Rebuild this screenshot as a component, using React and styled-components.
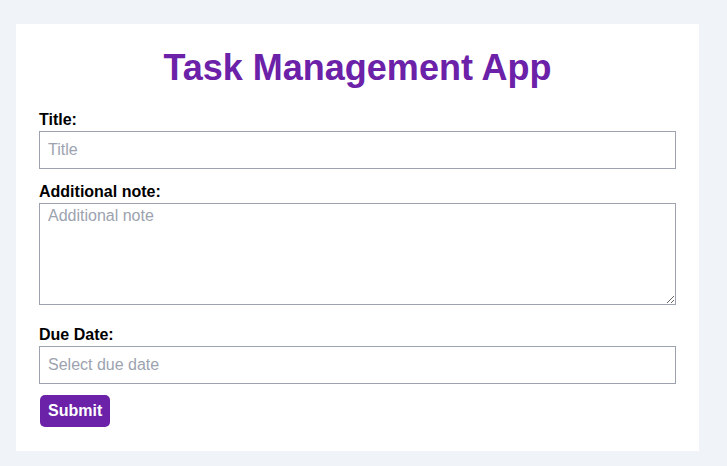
import React, { useState } from "react";
import styled, { createGlobalStyle } from "styled-components";

const GlobalStyle = createGlobalStyle`
  html,
  body {
    margin: 0;
    padding: 0;
    background-color: #f0f4f8;
    font-family: "Liberation Sans", Arial, sans-serif;
  }
`;

const Page = styled.div`
  min-height: 466px;
  box-sizing: border-box;
  padding: 24px 0 15px 16px;
`;

const Card = styled.div`
  width: 683px;
  box-sizing: border-box;
  padding: 23px 23px 24px;
  background-color: #ffffff;
`;

const Heading = styled.h1`
  margin: 0 0 23px;
  font-size: 36px;
  line-height: 41px;
  font-weight: bold;
  text-align: center;
  color: #6b21a8;
`;

const Form = styled.form`
  display: flex;
  flex-direction: column;
`;

const Field = styled.div`
  margin-bottom: ${(p) => p.$gap}px;
`;

const Label = styled.label`
  display: block;
  margin-bottom: 2px;
  font-size: 16px;
  line-height: 18px;
  font-weight: bold;
  color: #000000;
`;

const Input = styled.input`
  display: block;
  width: 100%;
  height: 38px;
  box-sizing: border-box;
  padding: 0 8px;
  border: 1px solid #9ca3af;
  border-radius: 0;
  font-family: inherit;
  font-size: 16px;
  color: #111827;
  outline: none;

  &::placeholder {
    color: #9ca3af;
  }
`;

const TextArea = styled.textarea`
  display: block;
  width: 100%;
  height: 102px;
  box-sizing: border-box;
  padding: 3px 8px;
  border: 1px solid #9ca3af;
  border-radius: 0;
  font-family: inherit;
  font-size: 16px;
  color: #111827;
  outline: none;

  &::placeholder {
    color: #9ca3af;
  }
`;

const SubmitButton = styled.button`
  align-self: flex-start;
  height: 32px;
  margin-left: 1px;
  padding: 0 8px;
  border: none;
  border-radius: 5px;
  background-color: #6b21a8;
  color: #ffffff;
  font-family: inherit;
  font-size: 16px;
  font-weight: bold;
  cursor: pointer;
`;

export default function App() {
  const [task, setTask] = useState({ title: "", note: "", due: "" });

  const update = (key) => (e) => setTask({ ...task, [key]: e.target.value });

  return (
    <>
      <GlobalStyle />
      <Page>
        <Card>
          <Heading>Task Management App</Heading>
          <Form onSubmit={(e) => e.preventDefault()}>
            <Field $gap={14}>
              <Label htmlFor="title">Title:</Label>
              <Input
                id="title"
                placeholder="Title"
                value={task.title}
                onChange={update("title")}
              />
            </Field>
            <Field $gap={21}>
              <Label htmlFor="note">Additional note:</Label>
              <TextArea
                id="note"
                placeholder="Additional note"
                value={task.note}
                onChange={update("note")}
              />
            </Field>
            <Field $gap={11}>
              <Label htmlFor="due">Due Date:</Label>
              <Input
                id="due"
                placeholder="Select due date"
                value={task.due}
                onChange={update("due")}
              />
            </Field>
            <SubmitButton type="submit">Submit</SubmitButton>
          </Form>
        </Card>
      </Page>
    </>
  );
}
